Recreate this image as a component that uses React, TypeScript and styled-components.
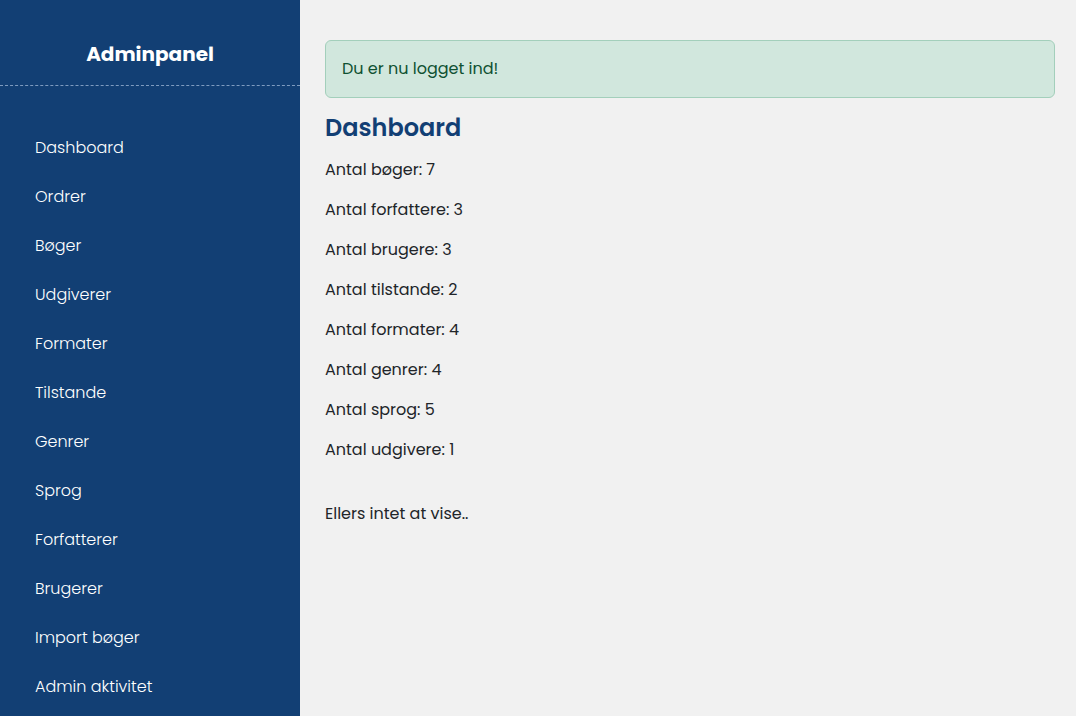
import styled, { createGlobalStyle } from "styled-components"

const GlobalStyle = createGlobalStyle`
  html, body {
    margin: 0;
    padding: 0;
    background: #f1f1f1;
    font-family: Poppins, Inter, "Noto Sans", sans-serif;
  }
`

const Layout = styled.div`
  display: flex;
  min-height: 716px;
`

const Sidebar = styled.aside`
  width: 300px;
  flex-shrink: 0;
  background: #123f74;
  color: #fff;
`

const Brand = styled.div`
  height: 86px;
  box-sizing: border-box;
  border-bottom: 1px dashed #7f9cc0;
  display: flex;
  align-items: flex-end;
  justify-content: center;
  padding-bottom: 16px;
  font-size: 20px;
  font-weight: 700;
  line-height: 30px;
`

const Nav = styled.nav`
  display: flex;
  flex-direction: column;
  padding: 37px 0 0 35px;
`

const NavLink = styled.a`
  color: #fff;
  font-size: 16px;
  font-weight: 300;
  line-height: 24px;
  padding: 12.5px 0;
  text-decoration: none;
`

const Main = styled.main`
  flex: 1;
  padding: 40px 21px 0 25px;
  color: #212529;
`

const Alert = styled.div`
  background: #d1e7dd;
  border: 1px solid #a3cfbb;
  border-radius: 6px;
  color: #0f5132;
  font-size: 16px;
  line-height: 24px;
  padding: 16px;
`

const Title = styled.h1`
  margin: 16px 0 16px;
  font-size: 24px;
  font-weight: 600;
  line-height: 28px;
  color: #123f74;
`

const Stat = styled.p`
  margin: 0 0 16px;
  font-size: 16px;
  line-height: 24px;
`

const Note = styled.p`
  margin: 40px 0 0;
  font-size: 16px;
  line-height: 24px;
`

const links = [
  "Dashboard",
  "Ordrer",
  "Bøger",
  "Udgiverer",
  "Formater",
  "Tilstande",
  "Genrer",
  "Sprog",
  "Forfatterer",
  "Brugerer",
  "Import bøger",
  "Admin aktivitet",
]

const stats: [string, number][] = [
  ["bøger", 7],
  ["forfattere", 3],
  ["brugere", 3],
  ["tilstande", 2],
  ["formater", 4],
  ["genrer", 4],
  ["sprog", 5],
  ["udgivere", 1],
]

const App = () => {
  return (
    <>
      <GlobalStyle />
      <Layout>
        <Sidebar>
          <Brand>Adminpanel</Brand>
          <Nav>
            {links.map((l) => (
              <NavLink key={l} href="#">
                {l}
              </NavLink>
            ))}
          </Nav>
        </Sidebar>
        <Main>
          <Alert>Du er nu logget ind!</Alert>
          <Title>Dashboard</Title>
          {stats.map(([name, n]) => (
            <Stat key={name}>
              Antal {name}: {n}
            </Stat>
          ))}
          <Note>Ellers intet at vise..</Note>
        </Main>
      </Layout>
    </>
  )
}

export default App
